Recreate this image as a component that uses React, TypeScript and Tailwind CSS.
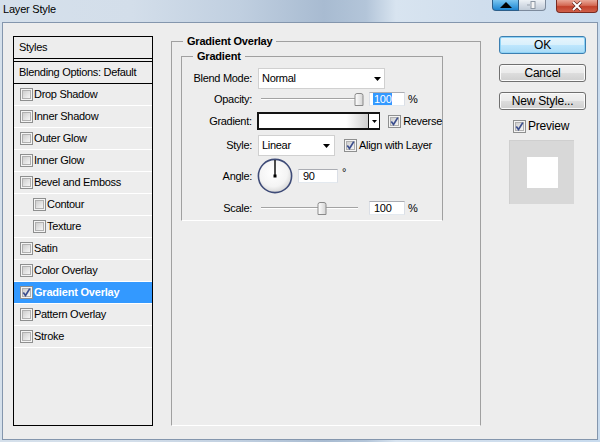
import React from "react";

function Check({ checked }: { checked?: boolean }) {
  return (
    <svg width="13" height="13" viewBox="0 0 13 13" className="shrink-0 block">
      <defs>
        <linearGradient id="cbg" x1="0" y1="0" x2="1" y2="1">
          <stop offset="0" stopColor="#cbcbcb" />
          <stop offset="1" stopColor="#f8f8f8" />
        </linearGradient>
      </defs>
      <rect x="0.5" y="0.5" width="12" height="12" fill="#f4f4f4" stroke="#8e8f8f" />
      <rect x="2.5" y="2.5" width="8" height="8" fill="url(#cbg)" stroke="#b0b0b0" />
      {checked && (
        <path d="M3.3 6.4 L5.5 9.4 L9.8 2.6" fill="none" stroke="#3b4e8e" strokeWidth="1.7" />
      )}
    </svg>
  );
}

function Arrow() {
  return (
    <svg width="7" height="4" viewBox="0 0 7 4" className="block">
      <path d="M0 0 H7 L3.5 4 Z" fill="#000" />
    </svg>
  );
}

function Slider({ thumb }: { thumb: number }) {
  return (
    <svg width="106" height="14" viewBox="0 0 106 14" className="block shrink-0">
      <defs>
        <linearGradient id="thg" x1="0" y1="0" x2="1" y2="0">
          <stop offset="0" stopColor="#ffffff" />
          <stop offset="1" stopColor="#d4d4d4" />
        </linearGradient>
      </defs>
      <rect x="3" y="6" width="97" height="1" fill="#a3a3a3" />
      <rect x="3" y="7" width="97" height="1" fill="#ffffff" />
      <path
        d={`M${thumb - 4} 13.5 V3.5 Q${thumb - 4} 1.5 ${thumb - 2} 1.5 H${thumb + 2} Q${thumb + 4} 1.5 ${thumb + 4} 3.5 V13.5 Z`}
        fill="url(#thg)"
        stroke="#8a8a8a"
      />
    </svg>
  );
}

function Dial() {
  return (
    <svg width="36" height="36" viewBox="0 0 36 36" className="block shrink-0">
      <defs>
        <radialGradient id="dg" cx="0.45" cy="0.4" r="0.6">
          <stop offset="0" stopColor="#ffffff" />
          <stop offset="0.7" stopColor="#f4f4f4" />
          <stop offset="1" stopColor="#d8d8d8" />
        </radialGradient>
      </defs>
      <circle cx="18" cy="18" r="16.6" fill="url(#dg)" stroke="#3f4c78" strokeWidth="1.6" />
      <line x1="18" y1="18" x2="18" y2="2" stroke="#000" strokeWidth="1.4" />
      <rect x="16.5" y="16.5" width="3" height="3" fill="#000" />
    </svg>
  );
}

const fieldCls =
  "h-[14px] bg-white border border-t-[#abadb3] border-x-[#dbdfe6] border-b-[#e3e9ef] flex items-center pl-[3px] text-[11px] leading-[12px] text-black";

function Row({ checked, children, indent, selected }: { checked?: boolean; children: React.ReactNode; indent?: boolean; selected?: boolean }) {
  return (
    <div
      className={`h-[22px] shrink-0 flex items-center gap-[1px] border-b border-white ${indent ? "pl-[19px]" : "pl-[6px]"} ${
        selected ? "bg-[#3399ff] text-white font-bold tracking-[-0.2px]" : "text-black"
      }`}
    >
      <Check checked={checked} />
      <span>{children}</span>
    </div>
  );
}

function Btn({ children, primary }: { children: React.ReactNode; primary?: boolean }) {
  return (
    <div
      className={`h-[18px] rounded-[3px] border flex items-center justify-center text-black ${
        primary
          ? "border-[#3c7fb1] bg-[linear-gradient(#e8f5fc_0%,#d9f0fc_48%,#bee6fd_52%,#a9dbf6_100%)] shadow-[inset_0_0_0_1px_#8fd3f6]"
          : "border-[#707070] bg-[linear-gradient(#f2f2f2_0%,#ebebeb_48%,#dddddd_52%,#cfcfcf_100%)] shadow-[inset_0_0_0_1px_#fbfbfb]"
      }`}
    >
      {children}
    </div>
  );
}

export default function App() {
  return (
    <div className="w-[600px] h-[442px] flex flex-col overflow-hidden font-['Liberation_Sans',Arial,sans-serif] text-[11px] leading-[13px] tracking-[-0.3px] px-[2px] pb-[2px] bg-[linear-gradient(90deg,#d5e0eb_0%,#d3deea_22%,#c0cfe0_40%,#a8bbd1_54%,#b3c5d9_61%,#d8e4f0_66%,#d0deed_80%,#c8dbee_100%)]">
      {/* Title bar */}
      <div className="flex h-[22px] shrink-0 items-start justify-between">
        <div className="pl-[1px] pt-[3px] text-[11px] leading-[13px] tracking-[-0.2px] text-black">Layer Style</div>
        <div className="flex items-start">
          <div className="w-[27px] h-[11px] rounded-bl-[4px] border border-t-0 border-[#2d5f8a] bg-[linear-gradient(#7cc6f0_0%,#4aa6e2_50%,#1f84cf_100%)] flex items-center justify-center">
            <svg width="12" height="6" viewBox="0 0 12 6" className="block">
              <path d="M0 6 L6 0 L12 6 Z" fill="#000" />
            </svg>
          </div>
          <div className="w-[27px] h-[11px] rounded-br-[4px] border border-t-0 border-l-0 border-[#7c8a9c] bg-[linear-gradient(#eef2f6_0%,#d6dde6_50%,#c2ccd8_100%)] flex items-center justify-center">
            <svg width="12" height="9" viewBox="0 0 12 9" className="block">
              <rect x="5" y="0.5" width="4" height="7" fill="#f4f4f4" stroke="#8e98a4" />
              <rect x="1" y="3" width="4" height="2" fill="#b8c0ca" />
            </svg>
          </div>
          <div className="ml-[10px] w-[42px] h-[13px] rounded-b-[4px] border border-t-0 border-[#7a2b21] bg-[linear-gradient(#e9a899_0%,#d46a55_45%,#c2412b_55%,#d0604a_100%)] flex items-center justify-center">
            <svg width="12" height="10" viewBox="0 0 12 10" className="block">
              <path d="M2 1 L10 9 M10 1 L2 9" stroke="#5a2018" strokeWidth="3.2" />
              <path d="M2 1 L10 9 M10 1 L2 9" stroke="#ffffff" strokeWidth="2" />
            </svg>
          </div>
        </div>
      </div>

      {/* Client area */}
      <div className="flex-1 border border-[#8496ad] bg-[#ededed] flex items-start">
        {/* Styles list */}
        <div className="ml-[10px] mt-[13px] w-[140px] h-[390px] border border-black flex flex-col">
          <div className="h-[22px] shrink-0 flex items-center pl-[5px] border-b border-black text-black">Styles</div>
          <div className="h-[2px] shrink-0" />
          <div className="h-[23px] shrink-0 flex items-center pl-[5px] border-y border-black text-black">Blending Options: Default</div>
          <Row>Drop Shadow</Row>
          <Row>Inner Shadow</Row>
          <Row>Outer Glow</Row>
          <Row>Inner Glow</Row>
          <Row>Bevel and Emboss</Row>
          <Row indent>Contour</Row>
          <Row indent>Texture</Row>
          <Row>Satin</Row>
          <Row>Color Overlay</Row>
          <Row checked selected>Gradient Overlay</Row>
          <Row>Pattern Overlay</Row>
          <Row>Stroke</Row>
        </div>

        {/* Main group */}
        <fieldset className="ml-[18px] mt-[12px] w-[310px] h-[391px] border border-[#a0a0a0] border-b-white p-0 m-0 min-w-0">
          <legend className="ml-[11px] px-[4px] font-bold leading-[13px] tracking-[-0.2px] text-black">Gradient Overlay</legend>
          <fieldset className="ml-[9px] mt-[2px] w-[262px] border border-[#a0a0a0] border-b-white pt-[5px] pb-[5px] px-0 min-w-0 text-black">
            <legend className="ml-[11px] px-[4px] font-bold leading-[13px] tracking-[-0.2px]">Gradient</legend>

            <div className="flex items-center h-[21px]">
              <div className="w-[70px] text-right">Blend Mode:</div>
              <div className="ml-[6px] w-[127px] h-[21px] bg-white border border-[#d0d0d0] flex items-center justify-between pl-[3px] pr-[3px]">
                <span>Normal</span>
                <Arrow />
              </div>
            </div>

            <div className="flex items-center h-[14px] mt-[3px]">
              <div className="w-[70px] text-right">Opacity:</div>
              <div className="ml-[6px]">
                <Slider thumb={101} />
              </div>
              <div className={`ml-[5px] w-[36px] ${fieldCls}`}>
                <span className="bg-[#3399ff] text-white px-[1px]">100</span>
              </div>
              <span className="ml-[3px]">%</span>
            </div>

            <div className="flex items-center h-[18px] mt-[6px]">
              <div className="w-[70px] text-right">Gradient:</div>
              <div className="ml-[5px] flex h-[18px] w-[124px] border-2 border-r border-[#141414]">
                <div className="flex-1 bg-[linear-gradient(90deg,#ffffff_0%,#ffffff_80%,#d0d0d0_100%)]" />
                <div className="w-[11px] border-l border-[#141414] bg-white flex items-center justify-center">
                  <svg width="5" height="3" viewBox="0 0 5 3" className="block">
                    <path d="M0 0 H5 L2.5 3 Z" fill="#000" />
                  </svg>
                </div>
              </div>
              <div className="ml-[8px] flex items-center gap-[2px]">
                <Check checked />
                <span>Reverse</span>
              </div>
            </div>

            <div className="flex items-center h-[21px] mt-[5px]">
              <div className="w-[70px] text-right">Style:</div>
              <div className="ml-[6px] w-[77px] h-[21px] bg-white border border-[#d0d0d0] flex items-center justify-between pl-[3px] pr-[4px]">
                <span>Linear</span>
                <Arrow />
              </div>
              <div className="ml-[9px] flex items-center gap-[2px]">
                <Check checked />
                <span>Align with Layer</span>
              </div>
            </div>

            <div className="flex items-center h-[36px] mt-[2px]">
              <div className="w-[70px] text-right">Angle:</div>
              <div className="ml-[5px]">
                <Dial />
              </div>
              <div className={`ml-[5px] w-[40px] ${fieldCls}`}>
                <span className="pl-[1px]">90</span>
              </div>
              <span className="ml-[4px] self-start mt-[8px]">°</span>
            </div>

            <div className="flex items-center h-[14px] mt-[7px]">
              <div className="w-[70px] text-right">Scale:</div>
              <div className="ml-[6px]">
                <Slider thumb={64} />
              </div>
              <div className={`ml-[5px] w-[36px] ${fieldCls}`}>
                <span className="pl-[1px]">100</span>
              </div>
              <span className="ml-[3px]">%</span>
            </div>
          </fieldset>
        </fieldset>

        {/* Right buttons */}
        <div className="ml-[18px] mt-[13px] w-[87px] flex flex-col text-[12px] leading-[14px] tracking-[-0.2px]">
          <Btn primary>OK</Btn>
          <div className="mt-[10px]">
            <Btn>Cancel</Btn>
          </div>
          <div className="mt-[10px]">
            <Btn>New Style...</Btn>
          </div>
          <div className="mt-[9px] ml-[14px] h-[14px] flex items-center gap-[2px] text-black">
            <Check checked />
            <span>Preview</span>
          </div>
          <div className="mt-[7px] ml-[10px] w-[65px] h-[64px] bg-[#d8d8d8] border-t border-l border-[#cfcfcf] flex items-center justify-center">
            <div className="w-[31px] h-[31px] bg-white" />
          </div>
        </div>
      </div>
    </div>
  );
}
